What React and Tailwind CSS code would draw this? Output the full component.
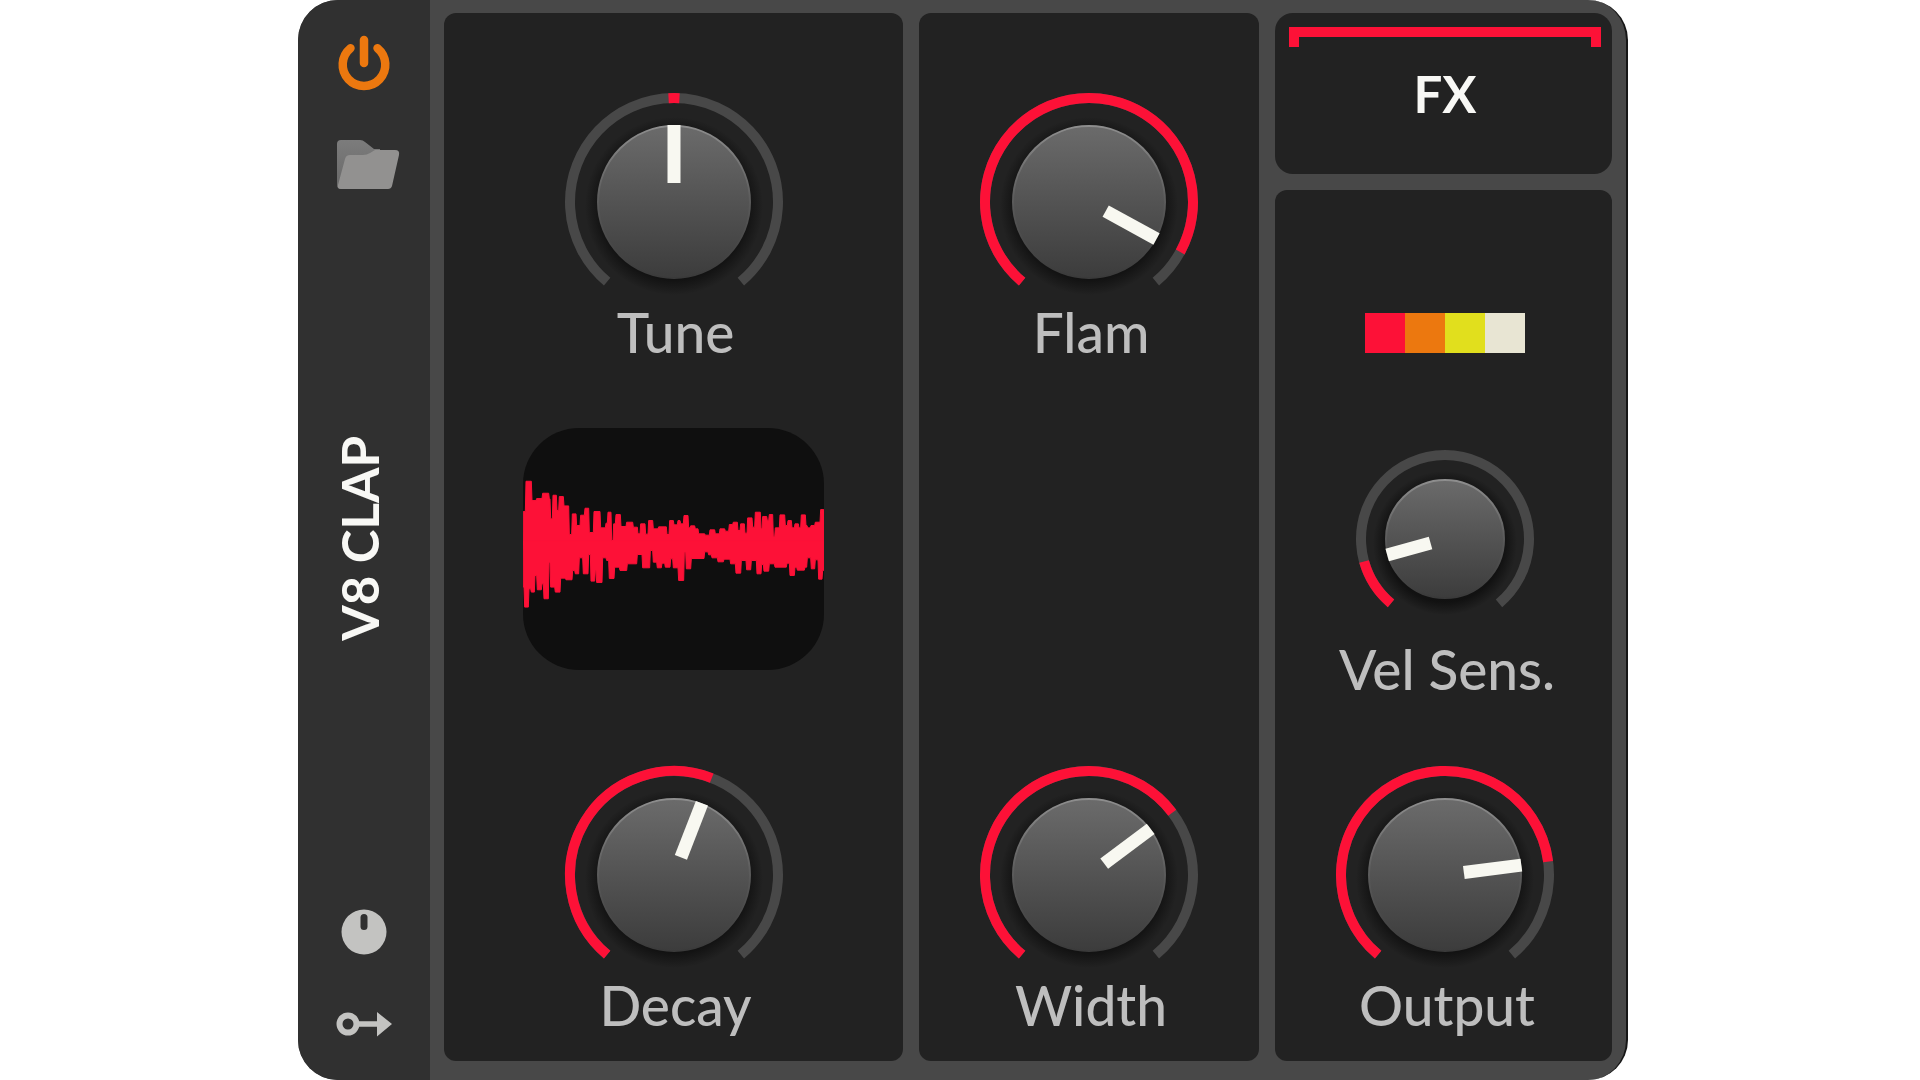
import { useId, useState } from "react";

const SWEEP = 280;

function polar(cx, cy, r, deg) {
  const a = (deg * Math.PI) / 180;
  return [cx + r * Math.sin(a), cy - r * Math.cos(a)];
}

function arc(cx, cy, r, from, to) {
  const [x1, y1] = polar(cx, cy, r, from);
  const [x2, y2] = polar(cx, cy, r, to);
  return `M${x1} ${y1}A${r} ${r} 0 ${to - from > 180 ? 1 : 0} 1 ${x2} ${y2}`;
}

const SIZES = {
  large: { outer: 109, track: 104, body: 76, inner: 19, height: 192, svg: "h-[192px] w-[218px]", gap: "gap-[19px]" },
  small: { outer: 89, track: 84, body: 59, inner: 15, height: 158, svg: "h-[158px] w-[178px]", gap: "gap-[33px]" },
};

function Knob({ label, initial, size = "large", bipolar = false }) {
  const id = useId();
  const [value, setValue] = useState(initial);
  const s = SIZES[size];
  const c = s.outer;
  const angle = (value / 100) * SWEEP - SWEEP / 2;
  const from = bipolar ? Math.min(0, angle) - 3 : -SWEEP / 2;
  const to = bipolar ? Math.max(0, angle) + 3 : angle;
  return (
    <div className={`flex flex-col items-center ${s.gap}`}>
      <div className="relative">
        <svg className={`block overflow-visible ${s.svg}`} viewBox={`0 0 ${c * 2} ${s.height}`} aria-hidden="true">
          <defs>
            <linearGradient id={`${id}-face`} x1="0" y1="0" x2="0" y2="1">
              <stop offset="0" stopColor="#6b6b6b" />
              <stop offset="0.5" stopColor="#535353" />
              <stop offset="1" stopColor="#3c3c3c" />
            </linearGradient>
            <linearGradient id={`${id}-rim`} x1="0" y1="0" x2="0" y2="1">
              <stop offset="0" stopColor="#8e8e8e" />
              <stop offset="0.5" stopColor="#5a5a5a" />
              <stop offset="1" stopColor="#3a3a3a" />
            </linearGradient>
            <radialGradient id={`${id}-shade`}>
              <stop offset="0.82" stopColor="#0c0c0c" stopOpacity="0.75" />
              <stop offset="1" stopColor="#0c0c0c" stopOpacity="0" />
            </radialGradient>
          </defs>
          <circle cx={c} cy={c + 4} r={s.body + 13} fill={`url(#${id}-shade)`} />
          <path d={arc(c, c, s.track, -SWEEP / 2, SWEEP / 2)} fill="none" stroke="#484848" strokeWidth="10" />
          <path d={arc(c, c, s.track, from, to)} fill="none" stroke="#fd1137" strokeWidth="10" />
          <circle cx={c} cy={c} r={s.body} fill={`url(#${id}-face)`} stroke={`url(#${id}-rim)`} strokeWidth="2" />
          <rect
            x={c - 6.5}
            y={c - s.body - 1}
            width="13"
            height={s.body + 1 - s.inner}
            fill="#f8f8f1"
            transform={`rotate(${angle} ${c} ${c})`}
          />
        </svg>
        <input
          id={id}
          type="range"
          min="0"
          max="100"
          value={value}
          onChange={(e) => setValue(Number(e.target.value))}
          className="absolute inset-0 h-full w-full cursor-pointer opacity-0"
        />
      </div>
      <label htmlFor={id} className="pl-1 text-[55px] leading-14 font-medium whitespace-nowrap text-[#bebebe]">
        {label}
      </label>
    </div>
  );
}

/* Each pair is [x, y]: from x on, the envelope holds level y. */
const UPPER = [
  [40, 303], [48, 212], [66, 270], [80, 264], [98, 248], [118, 265], [122, 325], [129, 254], [141, 300], [148, 258],
  [162, 286], [178, 372], [187, 310], [200, 345], [212, 314], [225, 293], [238, 366], [252, 303], [272, 352],
  [288, 338], [294, 305], [305, 390], [311, 340], [318, 312], [333, 348], [350, 335], [370, 350], [384, 370],
  [392, 340], [407, 371], [416, 330], [430, 355], [446, 349], [471, 372], [479, 330], [492, 343], [504, 330],
  [512, 340], [522, 315], [536, 352], [542, 346], [556, 355], [566, 370], [586, 374], [600, 358], [616, 370],
  [630, 355], [646, 362], [658, 342], [670, 335], [684, 360], [692, 340], [705, 368], [713, 322], [728, 350],
  [736, 305], [753, 355], [758, 318], [772, 330], [778, 312], [790, 378], [796, 352], [810, 313], [826, 345],
  [834, 330], [846, 352], [855, 340], [867, 352], [874, 313], [888, 345], [893, 352], [903, 345], [916, 335],
  [932, 297], [943, 297],
];
const LOWER = [
  [40, 530], [44, 590], [57, 535], [64, 545], [75, 495], [82, 538], [96, 520], [102, 565], [117, 455], [122, 530],
  [136, 545], [152, 503], [168, 508], [188, 480], [196, 490], [208, 442], [220, 490], [236, 432], [243, 512],
  [256, 480], [260, 516], [278, 442], [290, 450], [298, 504], [314, 470], [330, 480], [352, 460], [382, 432],
  [398, 472], [421, 420], [430, 455], [442, 472], [456, 458], [466, 470], [482, 445], [490, 472], [506, 510],
  [523, 425], [529, 475], [544, 444], [584, 424], [596, 433], [606, 442], [624, 454], [642, 446], [662, 460],
  [678, 488], [694, 450], [710, 478], [724, 450], [741, 490], [755, 462], [762, 482], [778, 460], [795, 470],
  [831, 458], [840, 495], [855, 470], [862, 479], [885, 470], [892, 442], [904, 475], [916, 448], [926, 506],
  [938, 480], [943, 480],
];

function steps(points) {
  return points.map(([x, y], i) => `${i ? `L${x - 1} ${points[i - 1][1]}` : ""}L${x + 1} ${y}`).join("");
}

const WAVE_ABOVE = `M40 402${steps(UPPER)}L944 402Z`;
const WAVE_BELOW = `M40 392${steps(LOWER)}L944 392Z`;

function Waveform() {
  return (
    <div className="mb-7 overflow-hidden rounded-[56px] bg-[#0f0f0f]">
      <svg
        className="block h-[242px] w-[301px]"
        viewBox="40 52 903 727"
        preserveAspectRatio="none"
        role="img"
        aria-label="Waveform"
        fill="#fd1137"
        stroke="#fd1137"
        strokeWidth="3"
        strokeLinejoin="round"
      >
        <path d={WAVE_ABOVE} />
        <path d={WAVE_BELOW} />
      </svg>
    </div>
  );
}

function Sidebar() {
  return (
    <aside className="flex w-[132px] shrink-0 flex-col items-center justify-between bg-[#303030] pt-[35px] pb-[43px]">
      <div className="flex flex-col items-center gap-12">
        <button type="button" aria-label="Power" className="block">
          <svg className="block h-14 w-14" viewBox="0 0 56 56" fill="none" stroke="#ec780f" strokeWidth="8.5" strokeLinecap="round">
            <path d="M14.5 13.2A21.3 21.3 0 1 0 41.5 13.2" />
            <path d="M28 5V28" />
          </svg>
        </button>
        <button type="button" aria-label="Open preset" className="block">
          <svg className="block h-[52px] w-[72px]" viewBox="-8 0 72 52">
            <defs>
              <linearGradient id="folder-back" x1="0" y1="0" x2="0" y2="1">
                <stop offset="0" stopColor="#7c7c7c" />
                <stop offset="1" stopColor="#686868" />
              </linearGradient>
            </defs>
            <path d="M5 1H24Q27 1 29 3L38 10H44V30L10 50H5Q1 50 1 46V5Q1 1 5 1Z" fill="url(#folder-back)" />
            <path d="M39 11H59Q64 11 63 16L56 47Q55 50 52 50H5Q1 50 2 46L9 20Q10 16 14 16H27Q31 16 34 14Z" fill="#929190" />
          </svg>
        </button>
      </div>
      <h1 className="mr-2 mb-6 rotate-180 text-[51px] leading-14 font-bold whitespace-nowrap text-[#f8f8f5] [writing-mode:vertical-rl]">
        V8 CLAP
      </h1>
      <div className="flex flex-col items-center gap-14">
        <button type="button" aria-label="Remote controls" className="block">
          <svg className="block h-[46px] w-[46px]" viewBox="0 0 46 46">
            <circle cx="23" cy="23" r="22.5" fill="#c3c3c1" />
            <rect x="19.5" y="5" width="7" height="16" rx="3.5" fill="#303030" />
          </svg>
        </button>
        <button type="button" aria-label="Modulation routing" className="block">
          <svg className="block h-[26px] w-14" viewBox="0 0 56 26">
            <circle cx="12" cy="13" r="8.5" fill="none" stroke="#c3c3c1" strokeWidth="6" />
            <path d="M21 10.3H41V1L56 13L41 25.5V15.7H21Z" fill="#c3c3c1" />
          </svg>
        </button>
      </div>
    </aside>
  );
}

const SWATCHES = ["bg-[#fd1137]", "bg-[#ec780f]", "bg-[#e1df1d]", "bg-[#e8e5d3]"];

export default function App() {
  return (
    <main className="flex min-h-screen justify-center bg-white pl-1.5 font-['Lato',sans-serif]">
      <div className="flex w-full max-w-[1330px] overflow-hidden rounded-[40px] border-r-2 border-[#161616] bg-[#484848]">
        <Sidebar />
        <div className="grid grow grid-cols-[459fr_340fr_337fr] gap-4 pt-[13px] pr-[14px] pb-[19px] pl-[14px]">
          <section className="flex flex-col items-center justify-between rounded-xl bg-[#222222] pt-20 pb-7">
            <Knob label="Tune" initial={50} bipolar />
            <Waveform />
            <Knob label="Decay" initial={57.6} />
          </section>
          <section className="flex flex-col items-center justify-between rounded-xl bg-[#222222] pt-20 pb-7">
            <Knob label="Flam" initial={92.4} />
            <Knob label="Width" initial={69} />
          </section>
          <div className="flex flex-col gap-4">
            <button
              type="button"
              className="flex h-[161px] flex-col items-center gap-[19px] rounded-[18px] bg-[#222222] pt-[14px] pr-[11px] pl-[14px]"
            >
              <span className="block h-5 w-full border-10 border-b-0 border-[#fd1137]" />
              <span className="text-[51px] leading-14 font-bold text-[#f8f8f5]">FX</span>
            </button>
            <section className="flex grow flex-col items-center justify-between rounded-xl bg-[#222222] pt-[123px] pr-[11px] pb-7 pl-[14px]">
              <div className="mb-7 flex">
                {SWATCHES.map((color) => (
                  <span key={color} className={`block size-10 ${color}`} />
                ))}
              </div>
              <Knob label="Vel Sens." initial={12.3} size="small" />
              <Knob label="Output" initial={79.5} />
            </section>
          </div>
        </div>
      </div>
    </main>
  );
}
